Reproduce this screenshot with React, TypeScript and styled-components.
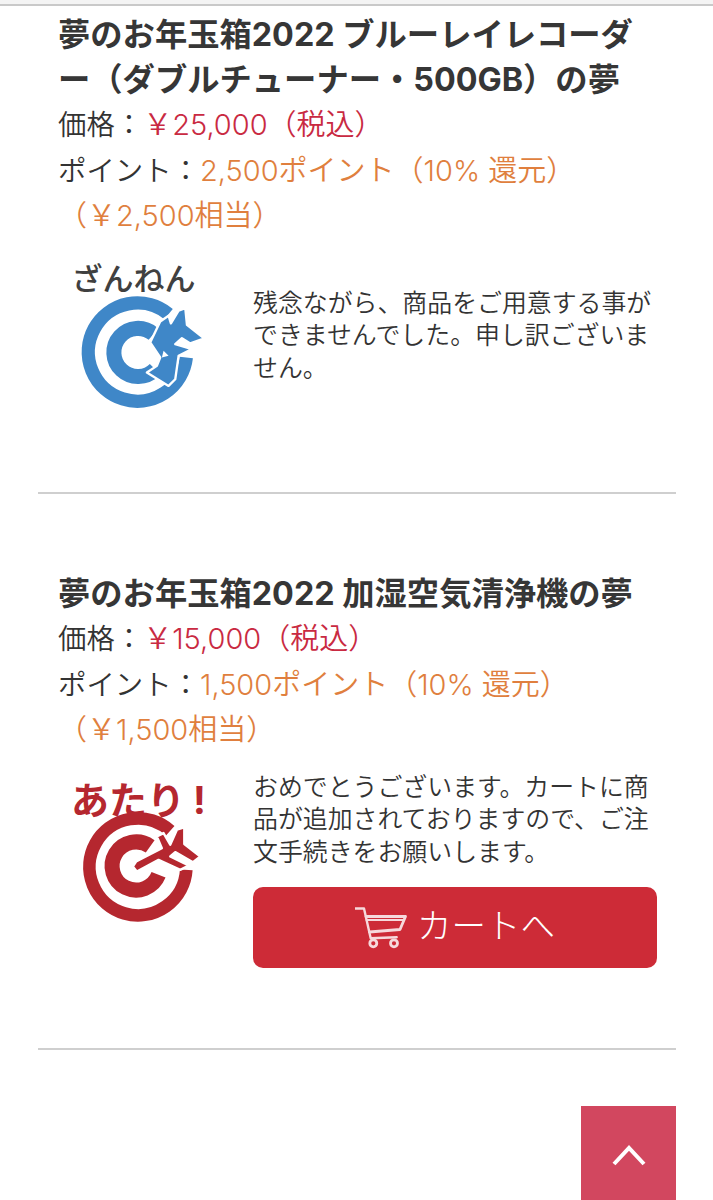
import React from "react";
import styled, { createGlobalStyle } from "styled-components";

const GlobalStyle = createGlobalStyle`
  html, body {
    margin: 0;
    padding: 0;
    background: #fff;
  }
  body {
    font-family: Inter, "Noto Sans CJK JP", sans-serif;
    color: #3b3b3b;
  }
`;

const Page = styled.div`
  position: relative;
  width: 713px;
  height: 1200px;
  overflow: hidden;
  background: #fff;
`;

const TopBar = styled.div`
  height: 4px;
  background: #f4f4f4;
  border-bottom: 2px solid #c9c9c9;
`;

const List = styled.div`
  padding: 0 37px 0 38px;
`;

const Item = styled.section<{ $height: number; $top: number }>`
  height: ${(p) => p.$height}px;
  padding: ${(p) => p.$top}px 0 0 20px;
  box-sizing: border-box;
  border-bottom: 2px solid #cfcfcf;
`;

const Title = styled.h2`
  margin: 0;
  font-size: 32.3px;
  line-height: 45px;
  font-weight: 700;
  color: #363636;
  white-space: nowrap;
`;

const Line = styled.div`
  font-size: 28.4px;
  line-height: 45.5px;
  font-weight: 350;
  color: #333;
  white-space: nowrap;
`;

const Price = styled.span`
  font-size: 29px;
  color: #c92a42;
`;

const Points = styled.span`
  font-size: 29px;
  color: #e07f3e;
`;

const Result = styled.div`
  display: flex;
  align-items: flex-start;
  margin-top: 15px;
`;

const LogoBox = styled.div`
  width: 195px;
  flex: none;
  padding-left: 12px;
  box-sizing: border-box;
`;

const LogoText = styled.div<{
  $color: string;
  $size: number;
  $weight: number;
  $width: number;
  $above: number;
  $below: number;
}>`
  width: ${(p) => p.$width}px;
  margin: ${(p) => p.$above}px 0 ${(p) => p.$below}px;
  text-align: center;
  font-size: ${(p) => p.$size}px;
  line-height: 36px;
  font-weight: ${(p) => p.$weight};
  color: ${(p) => p.$color};
  white-space: nowrap;
`;

const Bang = styled.span`
  margin-left: 8px;
`;

const LogoMark = styled.svg`
  display: block;
  width: 127px;
  height: 117px;
  margin-left: 10px;
`;

const Message = styled.div<{ $top: number }>`
  width: 404px;
  padding-top: ${(p) => p.$top}px;
`;

const MessageText = styled.p`
  margin: 0;
  font-size: 24.9px;
  line-height: 32.5px;
  font-weight: 350;
  color: #333;
  white-space: nowrap;
`;

const CartButton = styled.button`
  display: flex;
  align-items: center;
  justify-content: center;
  gap: 10px;
  width: 100%;
  height: 81px;
  margin-top: 19px;
  border: none;
  border-radius: 10px;
  background: #cd2b37;
  color: #fff;
  font-family: inherit;
  font-size: 34.5px;
  font-weight: 300;
`;

const CartLabel = styled.span`
  padding-bottom: 9px;
`;

const ToTop = styled.a`
  position: absolute;
  left: 581px;
  top: 1106px;
  width: 95px;
  height: 94px;
  padding-top: 4px;
  box-sizing: border-box;
  display: flex;
  align-items: center;
  justify-content: center;
  background: #d2475f;
`;

const BlueMark = () => (
  <LogoMark viewBox="120 130 380 350">
    <g fill="none" stroke="#3f87c8" strokeWidth="40">
      <path d="M385 190A147 147 0 1 0 438 320" />
      <path d="M340 250A72 72 0 1 0 345 355" strokeWidth="45" />
    </g>
    <path
      d="M360 212L385 195L392 218L415 180L435 172L440 222L492 263L450 278L425 262L405 280L455 295L415 315L405 385L385 405L320 365L350 345L360 320L330 275Z"
      fill="#3f87c8"
      stroke="#fff"
      strokeWidth="7"
      strokeLinejoin="round"
    />
    <path d="M370 300L385 315L365 320Z" fill="#fff" />
  </LogoMark>
);

const RedMark = () => (
  <LogoMark viewBox="120 130 380 350">
    <g fill="none" stroke="#b5272f" strokeWidth="38">
      <path d="M390 198A145 145 0 1 0 438 315" />
      <path d="M330 245A72 72 0 1 0 355 330" strokeWidth="45" />
    </g>
    <path
      d="M350 215L370 205L390 240L410 195L432 188L432 238L480 275L458 292L405 262L390 275L445 302L420 315L355 285L290 320L278 305L288 290L365 250Z"
      fill="#b5272f"
      stroke="#fff"
      strokeWidth="7"
      strokeLinejoin="round"
    />
  </LogoMark>
);

const CartIcon = () => (
  <svg width="52" height="42" viewBox="0 0 52 42" fill="none" stroke="#f6d9dc" strokeLinecap="round" strokeLinejoin="round">
    <path d="M0.5 1.5H9L15.7 31.3L41.7 30.3" strokeWidth="2.4" />
    <path d="M11 9.5H50.5L45 22.5L14.5 25" strokeWidth="2.8" />
    <path d="M11.5 13H49" strokeWidth="2" />
    <circle cx="18.3" cy="36.3" r="3.5" strokeWidth="2.8" />
    <circle cx="39" cy="36.3" r="3.5" strokeWidth="2.8" />
  </svg>
);

const Chevron = () => (
  <svg width="34" height="22" viewBox="0 0 34 22" fill="none" stroke="#fff" strokeWidth="4">
    <path d="M2 20L17 4L32 20" />
  </svg>
);

export default function App() {
  return (
    <Page>
      <GlobalStyle />
      <TopBar />
      <List>
        <Item $height={488} $top={6}>
          <Title>
            夢のお年玉箱2022 ブルーレイレコーダ
            <br />
            ー（ダブルチューナー・500GB）の夢
          </Title>
          <Line>
            価格：<Price>￥25,000（税込）</Price>
          </Line>
          <Line>
            ポイント：<Points>2,500ポイント（10% 還元）</Points>
          </Line>
          <Line>
            <Points>（￥2,500相当）</Points>
          </Line>
          <Result>
            <LogoBox>
              <LogoText $color="#404040" $size={31} $weight={500} $width={127} $above={7} $below={-3}>
                ざんねん
              </LogoText>
              <BlueMark />
            </LogoBox>
            <Message $top={33}>
              <MessageText>
                残念ながら、商品をご用意する事が
                <br />
                できませんでした。申し訳ございま
                <br />
                せん。
              </MessageText>
            </Message>
          </Result>
        </Item>
        <Item $height={556} $top={77}>
          <Title>夢のお年玉箱2022 加湿空気清浄機の夢</Title>
          <Line>
            価格：<Price>￥15,000（税込）</Price>
          </Line>
          <Line>
            ポイント：<Points>1,500ポイント（10% 還元）</Points>
          </Line>
          <Line>
            <Points>（￥1,500相当）</Points>
          </Line>
          <Result>
            <LogoBox>
              <LogoText $color="#b5272f" $size={38} $weight={700} $width={137} $above={14} $below={-10}>
                あたり<Bang>!</Bang>
              </LogoText>
              <RedMark />
            </LogoBox>
            <Message $top={3}>
              <MessageText>
                おめでとうございます。カートに商
                <br />
                品が追加されておりますので、ご注
                <br />
                文手続きをお願いします。
              </MessageText>
              <CartButton>
                <CartIcon />
                <CartLabel>カートへ</CartLabel>
              </CartButton>
            </Message>
          </Result>
        </Item>
      </List>
      <ToTop>
        <Chevron />
      </ToTop>
    </Page>
  );
}
